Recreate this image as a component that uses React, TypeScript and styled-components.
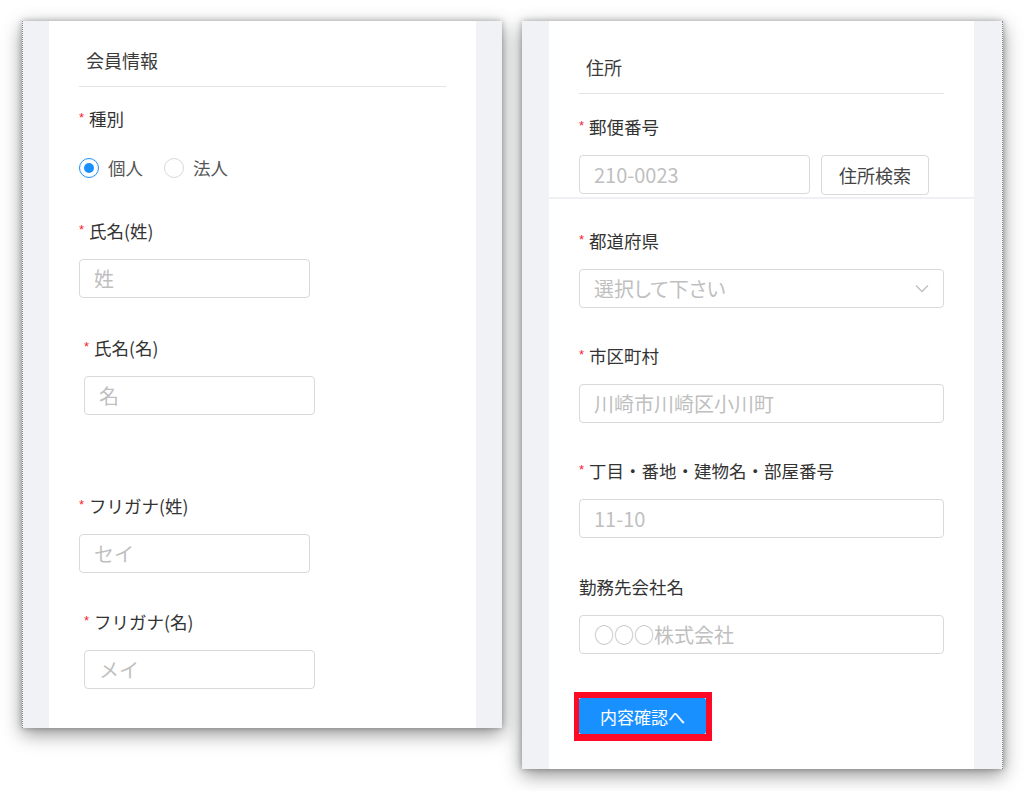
import styled, { createGlobalStyle } from "styled-components"
import { type FC, type ReactNode } from "react"

const GlobalStyle = createGlobalStyle`
  body {
    margin: 0;
    background: #fff;
    font-family: "Noto Sans CJK JP", "Noto Sans", sans-serif;
    color: rgba(0, 0, 0, 0.85);
  }
`

const Page = styled.div`
  display: flex;
  align-items: flex-start;
  gap: 20px;
  padding: 21px 0 40px 22px;
`

const Panel = styled.section<{ $width: number; $height: number; $pad: string; $edge: "left" | "right" }>`
  display: flex;
  box-sizing: border-box;
  width: ${(p) => p.$width}px;
  height: ${(p) => p.$height}px;
  padding: ${(p) => p.$pad};
  background: #f0f2f5;
  box-shadow: 0 6px 18px rgba(0, 0, 0, 0.42), 0 0 6px rgba(0, 0, 0, 0.28);
  border-${(p) => p.$edge}: 1px dotted #8a8a8a;
`

const Sheet = styled.div`
  flex: 1;
  display: flex;
  flex-direction: column;
  background: #fff;
`

const Block = styled.div<{ $pt?: number; $pb?: number; $divider?: boolean }>`
  padding: ${(p) => p.$pt ?? 0}px 30px ${(p) => p.$pb ?? 0}px;
  border-bottom: ${(p) => (p.$divider ? "2px solid #eef0f3" : "none")};
`

const Title = styled.h3<{ $pt: number }>`
  margin: 0;
  padding: ${(p) => p.$pt}px 0 14px 7px;
  border-bottom: 1px solid #e3e3e3;
  font-size: 18px;
  line-height: 24px;
  font-weight: 400;
  color: #3a3a3a;
`

const Field = styled.div<{ $mt: number; $shift?: number }>`
  margin-top: ${(p) => p.$mt}px;
  padding-left: ${(p) => p.$shift ?? 0}px;
`

const Label = styled.div<{ $mb?: number }>`
  display: flex;
  align-items: center;
  margin-bottom: ${(p) => p.$mb ?? 16}px;
  font-size: 17.5px;
  line-height: 24px;
  color: #333;
`

const Required = styled.span`
  margin-right: 5px;
  color: #f5222d;
  font-family: "Liberation Sans", sans-serif;
  font-size: 13px;
  line-height: 1;
  transform: translateY(-2px);
`

const TextInput = styled.input<{ $width?: number }>`
  display: block;
  box-sizing: border-box;
  width: ${(p) => (p.$width ? `${p.$width}px` : "100%")};
  height: 39px;
  padding: 0 14px;
  border: 1px solid #d9d9d9;
  border-radius: 4px;
  background: #fff;
  font-family: "Noto Sans CJK JP", "Noto Sans", sans-serif;
  font-size: 20px;
  color: #333;
  outline: none;

  &::placeholder {
    color: #bfbfbf;
  }
`

const SelectBox = styled.div`
  display: flex;
  align-items: center;
  justify-content: space-between;
  box-sizing: border-box;
  height: 39px;
  padding: 0 14px;
  border: 1px solid #d9d9d9;
  border-radius: 4px;
  background: #fff;
`

const SelectPlaceholder = styled.span`
  font-size: 20px;
  color: #bfbfbf;
  font-feature-settings: "palt";
`

const Row = styled.div`
  display: flex;
  align-items: flex-start;
  gap: 11px;
`

const GhostButton = styled.button`
  box-sizing: border-box;
  width: 108px;
  height: 40px;
  border: 1px solid #d9d9d9;
  border-radius: 4px;
  background: #fff;
  font-family: "Noto Sans CJK JP", "Noto Sans", sans-serif;
  font-size: 18px;
  color: #444;
  padding: 0;
`

const RadioGroup = styled.div`
  display: flex;
  align-items: center;
  gap: 21px;
`

const RadioItem = styled.label`
  display: inline-flex;
  align-items: center;
  gap: 9px;
  font-size: 17.5px;
  line-height: 24px;
  color: #555;
`

const RadioDot = styled.span<{ $checked?: boolean }>`
  position: relative;
  box-sizing: border-box;
  width: 20px;
  height: 20px;
  border-radius: 50%;
  border: ${(p) => (p.$checked ? "1.5px solid #1890ff" : "1px solid #d9d9d9")};
  background: #fff;

  &::after {
    content: "";
    display: ${(p) => (p.$checked ? "block" : "none")};
    position: absolute;
    left: 50%;
    top: 50%;
    width: 10px;
    height: 10px;
    margin: -5px 0 0 -5px;
    border-radius: 50%;
    background: #1890ff;
  }
`

const Highlight = styled.div`
  display: flex;
  width: fit-content;
  margin: 38px 0 0 -5px;
  border-style: solid;
  border-color: #ff0a24;
  border-width: 6px 6px 7px 5px;
  background: #fff;
`

const PrimaryButton = styled.button`
  width: 127px;
  height: 36px;
  padding: 0;
  border: none;
  border-radius: 2px;
  background: #1890ff;
  font-family: "Noto Sans CJK JP", "Noto Sans", sans-serif;
  font-size: 17px;
  color: #fff;
`

const FieldLabel: FC<{ required?: boolean; mb?: number; children: ReactNode }> = ({
  required = true,
  mb,
  children,
}) => (
  <Label $mb={mb}>
    {required && <Required>*</Required>}
    {children}
  </Label>
)

const Chevron = () => (
  <svg width="14" height="9" viewBox="0 0 14 9" fill="none">
    <polyline points="1,1.5 7,7.5 13,1.5" stroke="#bfbfbf" strokeWidth="1.3" />
  </svg>
)

const MemberPanel = () => (
  <Panel $width={480} $height={707} $pad="0 26px" $edge="left">
    <Sheet>
      <Block>
        <Title $pt={27}>会員情報</Title>

        <Field $mt={20}>
          <FieldLabel mb={25}>種別</FieldLabel>
          <RadioGroup>
            <RadioItem>
              <RadioDot $checked />
              個人
            </RadioItem>
            <RadioItem>
              <RadioDot />
              法人
            </RadioItem>
          </RadioGroup>
        </Field>

        <Field $mt={39}>
          <FieldLabel>氏名(姓)</FieldLabel>
          <TextInput $width={231} placeholder="姓" />
        </Field>

        <Field $mt={38} $shift={5}>
          <FieldLabel>氏名(名)</FieldLabel>
          <TextInput $width={231} placeholder="名" />
        </Field>

        <Field $mt={79}>
          <FieldLabel>フリガナ(姓)</FieldLabel>
          <TextInput $width={231} placeholder="セイ" />
        </Field>

        <Field $mt={37} $shift={5}>
          <FieldLabel>フリガナ(名)</FieldLabel>
          <TextInput $width={231} placeholder="メイ" />
        </Field>
      </Block>
    </Sheet>
  </Panel>
)

const AddressPanel = () => (
  <Panel $width={481} $height={748} $pad="0 28px 0 27px" $edge="right">
    <Sheet>
      <Block $pb={2} $divider>
        <Title $pt={34}>住所</Title>
        <Field $mt={21}>
          <FieldLabel>郵便番号</FieldLabel>
          <Row>
            <TextInput $width={231} placeholder="210-0023" />
            <GhostButton>住所検索</GhostButton>
          </Row>
        </Field>
      </Block>

      <Block $pt={30}>
        <Field $mt={0}>
          <FieldLabel>都道府県</FieldLabel>
          <SelectBox>
            <SelectPlaceholder>選択して下さい</SelectPlaceholder>
            <Chevron />
          </SelectBox>
        </Field>

        <Field $mt={36}>
          <FieldLabel>市区町村</FieldLabel>
          <TextInput placeholder="川崎市川崎区小川町" />
        </Field>

        <Field $mt={36}>
          <FieldLabel>丁目・番地・建物名・部屋番号</FieldLabel>
          <TextInput placeholder="11-10" />
        </Field>

        <Field $mt={37}>
          <FieldLabel required={false}>勤務先会社名</FieldLabel>
          <TextInput placeholder="○○○株式会社" />
        </Field>

        <Highlight>
          <PrimaryButton>内容確認へ</PrimaryButton>
        </Highlight>
      </Block>
    </Sheet>
  </Panel>
)

const App = () => (
  <>
    <GlobalStyle />
    <Page>
      <MemberPanel />
      <AddressPanel />
    </Page>
  </>
)

export default App
